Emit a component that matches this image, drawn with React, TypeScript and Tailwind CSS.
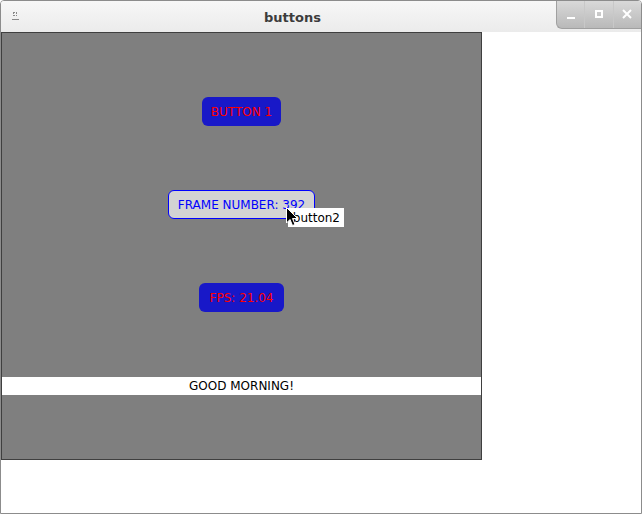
export default function App() {
  return (
    <div
      className="w-[642px] h-[514px] bg-white border border-[#8c8c8c] rounded-t-[4px] flex flex-col overflow-hidden"
      style={{ fontFamily: '"DejaVu Sans", "Liberation Sans", sans-serif' }}
    >
      {/* title bar */}
      <div className="h-[31px] shrink-0 bg-gradient-to-b from-[#f7f7f7] to-[#ebebeb] flex items-start">
        <div className="w-[28px] h-full flex flex-col items-center pt-[11px]">
          <div className="w-[4px] h-[4px] border border-dotted border-[#888]" />
          <div className="w-[7px] h-[1px] bg-[#888] mt-[3px]" />
        </div>
        <div className="flex-1 h-full flex items-center justify-center">
          <span className="text-[13px] font-bold text-[#3c3c3c] mt-[2px]">buttons</span>
        </div>
        <div className="mt-[-1px] h-[29px] w-[85px] flex rounded-bl-[6px] border-l border-b border-[#a0a0a0] bg-gradient-to-b from-[#dadada] to-[#b9b9b9]">
          <div className="flex-1 flex items-center justify-center border-r border-[#c8c8c8]">
            <div className="w-[8px] h-[2px] bg-white mt-[8px]" />
          </div>
          <div className="flex-1 flex items-center justify-center border-r border-[#c8c8c8]">
            <div className="w-[8px] h-[8px] border-2 border-white" />
          </div>
          <div className="flex-1 flex items-center justify-center">
            <svg width="10" height="10" viewBox="0 0 10 10">
              <path d="M1 1 L9 9 M9 1 L1 9" stroke="white" strokeWidth="2" />
            </svg>
          </div>
        </div>
      </div>

      {/* client area */}
      <div className="flex-1 flex items-start">
        <div className="relative w-[481px] h-[428px] bg-[#7f7f7f] border border-[#3f3f3f] flex flex-col items-center pt-[64px]">
          <div className="w-[79px] h-[29px] rounded-[6px] bg-[#1818c8] flex items-center justify-center text-[12px] text-[#ff0000]">
            BUTTON 1
          </div>
          <div className="mt-[64px] w-[147px] h-[29px] rounded-[6px] bg-[#d3d3d3] border border-[#0000ff] flex items-center justify-center text-[12px] text-[#0000ff]">
            FRAME NUMBER: 392
          </div>
          <div className="mt-[64px] w-[85px] h-[29px] rounded-[6px] bg-[#1818c8] flex items-center justify-center text-[12px] text-[#ff0000]">
            FPS: 21.04
          </div>
          <div className="mt-[65px] w-full h-[18px] bg-white flex items-center justify-center text-[12px] text-black">
            GOOD MORNING!
          </div>

          {/* tooltip + cursor */}
          <div className="absolute left-[286px] top-[175px] w-[56px] h-[19px] bg-white flex items-center justify-end pr-[4px] text-[12px] text-black">
            button2
          </div>
          <svg className="absolute left-[284px] top-[174px]" width="13" height="20" viewBox="0 0 13 20">
            <path d="M0.5 0.5 L0.5 16 L4 12.5 L6.5 18.5 L9 17.5 L6.5 11.5 L11.5 11.5 Z" fill="black" stroke="white" strokeWidth="1" />
          </svg>
        </div>
      </div>
    </div>
  );
}
